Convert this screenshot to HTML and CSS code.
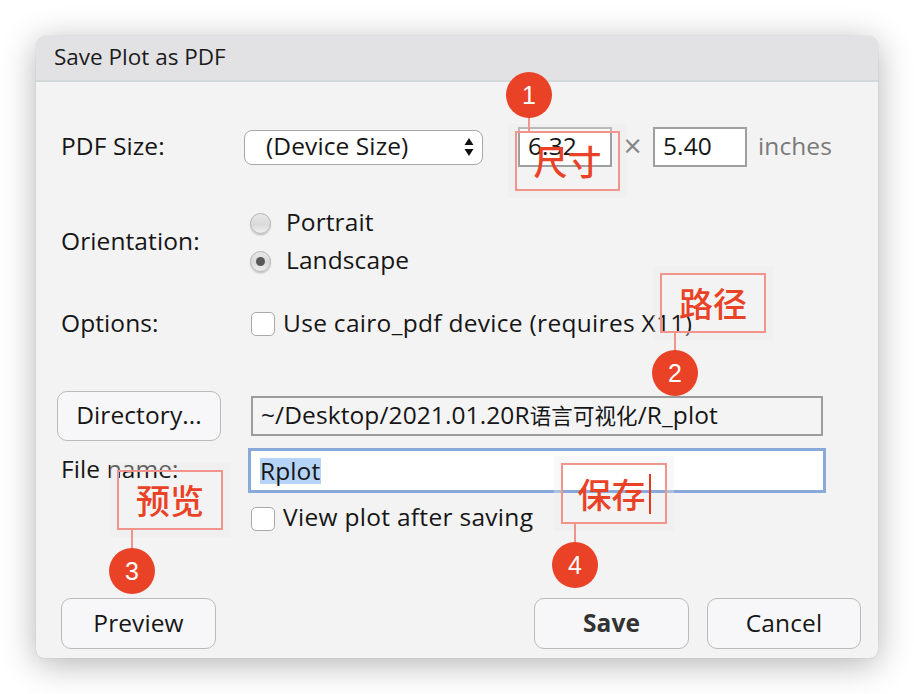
FILE: index.html
```html
<!DOCTYPE html>
<html lang="zh-CN">
<head>
<meta charset="utf-8">
<title>Save Plot as PDF</title>
<link rel="stylesheet" href="styles.css">
</head>
<body>
<div class="window">
  <div class="titlebar">Save Plot as PDF</div>
  <div class="content">
    <div class="row row-size">
      <div class="label">PDF Size:</div>
      <div class="select">
        <span>(Device Size)</span>
        <svg class="arrows" width="10" height="20" viewBox="0 0 10 20"><path d="M5 1 L9.5 8 L0.5 8 Z M0.5 12 L9.5 12 L5 19 Z" fill="#111"/></svg>
      </div>
      <div class="num num-w">6.32</div>
      <span class="times">×</span>
      <div class="num">5.40</div>
      <span class="unit">inches</span>
    </div>

    <div class="row row-orient">
      <div class="label">Orientation:</div>
      <div class="radios">
        <div class="radio-item"><span class="radio"></span><span class="txt">Portrait</span></div>
        <div class="radio-item"><span class="radio checked"></span><span class="txt">Landscape</span></div>
      </div>
    </div>

    <div class="row row-options">
      <div class="label">Options:</div>
      <span class="check"></span>
      <span class="check-text">Use cairo_pdf device (requires X11)</span>
    </div>

    <div class="row row-dir">
      <div class="btn btn-dir">Directory...</div>
      <div class="field field-path">~/Desktop/2021.01.20R<span class="cjk">语言可视化</span>/R_plot</div>
    </div>

    <div class="row row-file">
      <div class="label">File name:</div>
      <div class="field field-name"><span class="sel">Rplot</span></div>
    </div>

    <div class="row row-view">
      <div class="label"></div>
      <span class="check"></span>
      <span class="check-text">View plot after saving</span>
    </div>

    <div class="row row-buttons">
      <div class="btn btn-preview">Preview</div>
      <div class="spacer"></div>
      <div class="btn btn-save">Save</div>
      <div class="btn btn-cancel">Cancel</div>
    </div>
  </div>

  <div class="notes">
    <div class="note-box nb1">尺寸</div>
    <div class="note-line nl1"></div>
    <div class="badge b1">1</div>

    <div class="note-box nb2">路径</div>
    <div class="note-line nl2"></div>
    <div class="badge b2">2</div>

    <div class="note-box nb3">预览</div>
    <div class="note-line nl3"></div>
    <div class="badge b3">3</div>

    <div class="note-box nb4">保存<span class="caret"></span></div>
    <div class="note-line nl4"></div>
    <div class="badge b4">4</div>
  </div>
</div>
</body>
</html>
```

FILE: styles.css
```css
html, body {
  margin: 0;
  padding: 0;
  background: #ffffff;
}

body {
  width: 914px;
  height: 694px;
  overflow: hidden;
  font-family: "Open Sans", "Noto Sans CJK SC", sans-serif;
  color: #161616;
}

.window {
  position: relative;
  margin: 36px 0 0 36px;
  width: 842px;
  background: #f3f3f3;
  border-radius: 10px 10px 8px 8px;
  box-shadow: 0 6px 34px rgba(0, 0, 0, 0.30), 0 0 1px rgba(0, 0, 0, 0.25);
}

.titlebar {
  height: 46px;
  box-sizing: border-box;
  padding-left: 18px;
  padding-bottom: 3px;
  display: flex;
  align-items: center;
  font-size: 22.5px;
  color: #1c1c1c;
  background: #e2e2e4;
  border-bottom: 2px solid #d3d8da;
  border-radius: 10px 10px 0 0;
}

.content {
  padding: 45px 17px 9px 25px;
  font-size: 24.5px;
  letter-spacing: 0.1px;
}

.row {
  display: flex;
  align-items: center;
}

.label {
  width: 183px;
  flex: none;
  white-space: nowrap;
  padding-bottom: 4px;
}

/* row 1 */
.row-size { height: 40px; }

.select {
  width: 239px;
  height: 35px;
  box-sizing: border-box;
  border: 1.5px solid #a8a8a8;
  border-radius: 8px;
  background: #ffffff;
  display: flex;
  align-items: center;
  padding-left: 21px;
  padding-right: 8px;
}

.select span { flex: 1; white-space: nowrap; padding-bottom: 3px; }

.arrows { flex: none; }

.num {
  width: 94px;
  height: 40px;
  box-sizing: border-box;
  border: 2px solid #9f9f9f;
  background: #ffffff;
  display: flex;
  align-items: center;
  padding-left: 8px;
  padding-bottom: 3px;
}

.num-w { margin-left: 35px; }

.times {
  width: 41px;
  text-align: center;
  color: #858585;
  font-family: "DejaVu Sans", sans-serif;
  font-size: 25px;
  padding-bottom: 3px;
}

.unit {
  margin-left: 11px;
  color: #7a7a7a;
  padding-bottom: 4px;
}

/* orientation */
.row-orient { margin-top: 37px; }

.radios {
  display: flex;
  flex-direction: column;
  margin-left: 6px;
}

.radio-item {
  height: 38px;
  display: flex;
  align-items: center;
}

.txt { padding-bottom: 4px; }

.radio {
  width: 21px;
  height: 21px;
  box-sizing: border-box;
  border-radius: 50%;
  border: 1px solid #b3b3b3;
  background: linear-gradient(#e8e8e8, #dadada 55%, #efefef);
  box-shadow: 0 1.5px 1.5px rgba(0, 0, 0, 0.18);
  margin-right: 15px;
  display: flex;
  align-items: center;
  justify-content: center;
}

.radio.checked::after {
  content: "";
  width: 9px;
  height: 9px;
  border-radius: 50%;
  background: #585858;
}

/* options */
.row-options { margin-top: 25px; height: 38px; }

.check {
  width: 24px;
  height: 24px;
  box-sizing: border-box;
  border: 1.5px solid #a9a9a9;
  border-radius: 5px;
  background: #ffffff;
  margin-left: 7px;
  margin-right: 8px;
  flex: none;
}

.check-text { white-space: nowrap; padding-bottom: 4px; letter-spacing: 0.3px; }

/* directory */
.row-dir { margin-top: 48px; height: 50px; }

.btn {
  height: 51px;
  box-sizing: border-box;
  border: 1.5px solid #bababa;
  border-radius: 10px;
  background: #f7f7f9;
  display: flex;
  align-items: center;
  justify-content: center;
  white-space: nowrap;
  padding-bottom: 3px;
}

.btn-dir {
  width: 164px;
  height: 50px;
  margin-left: -4px;
}

.field {
  box-sizing: border-box;
  display: flex;
  align-items: center;
  white-space: nowrap;
}

.field-path {
  margin-left: 30px;
  width: 572px;
  height: 40px;
  border: 2px solid #9c9c9c;
  background: #f4f4f4;
  padding-left: 8px;
  padding-bottom: 3px;
}

.cjk {
  font-size: 21.5px;
}

/* file name */
.row-file { margin-top: 7px; height: 45px; }

.field-name {
  margin-left: 4px;
  width: 578px;
  height: 45px;
  border: 3px solid #88a9d9;
  background: #ffffff;
  padding-left: 9px;
}

.sel {
  background: #b5d4f8;
  line-height: 25px;
  padding-bottom: 1px;
  padding-right: 1px;
}

/* view */
.row-view { margin-top: 13px; height: 25px; }

/* buttons */
.row-buttons { margin-top: 67px; height: 51px; }

.btn-preview { width: 155px; }

.spacer { flex: 1; }

.btn-save {
  width: 155px;
  font-weight: 700;
  color: #333333;
}

.btn-cancel {
  width: 154px;
  margin-left: 18px;
}

/* annotations */
.notes {
  position: absolute;
  inset: 0;
  pointer-events: none;
}

.note-box {
  position: absolute;
  width: 106px;
  height: 60px;
  box-sizing: border-box;
  border: 2px solid #f1958c;
  box-shadow: 0 0 0 7px rgba(236, 236, 236, 0.35);
  display: flex;
  align-items: center;
  justify-content: center;
  font-family: "Noto Sans CJK SC", sans-serif;
  font-size: 34px;
  font-weight: 500;
  color: #ea4227;
  line-height: 1;
  letter-spacing: 0;
}

.nb1 { left: 479px; top: 95px; width: 105px; }
.nb2 { left: 624px; top: 237px; }
.nb3 { left: 81px; top: 434px; }
.nb4 { left: 525px; top: 427px; height: 61px; }

.caret {
  width: 2px;
  height: 40px;
  background: #e23a20;
  margin-left: 3px;
}

.note-line {
  position: absolute;
  width: 2px;
  background: #f1958c;
}

.nl1 { left: 492px; top: 80px; height: 15px; }
.nl2 { left: 638px; top: 297px; height: 18px; }
.nl3 { left: 95px; top: 494px; height: 19px; }
.nl4 { left: 538px; top: 488px; height: 19px; }

.badge {
  position: absolute;
  width: 46px;
  height: 46px;
  border-radius: 50%;
  background: #ea4227;
  color: #ffffff;
  font-family: "Liberation Sans", Arial, sans-serif;
  font-size: 25px;
  display: flex;
  align-items: center;
  justify-content: center;
}

.b1 { left: 470px; top: 36px; }
.b2 { left: 616px; top: 314px; }
.b3 { left: 73px; top: 512px; }
.b4 { left: 516px; top: 506px; }
```
